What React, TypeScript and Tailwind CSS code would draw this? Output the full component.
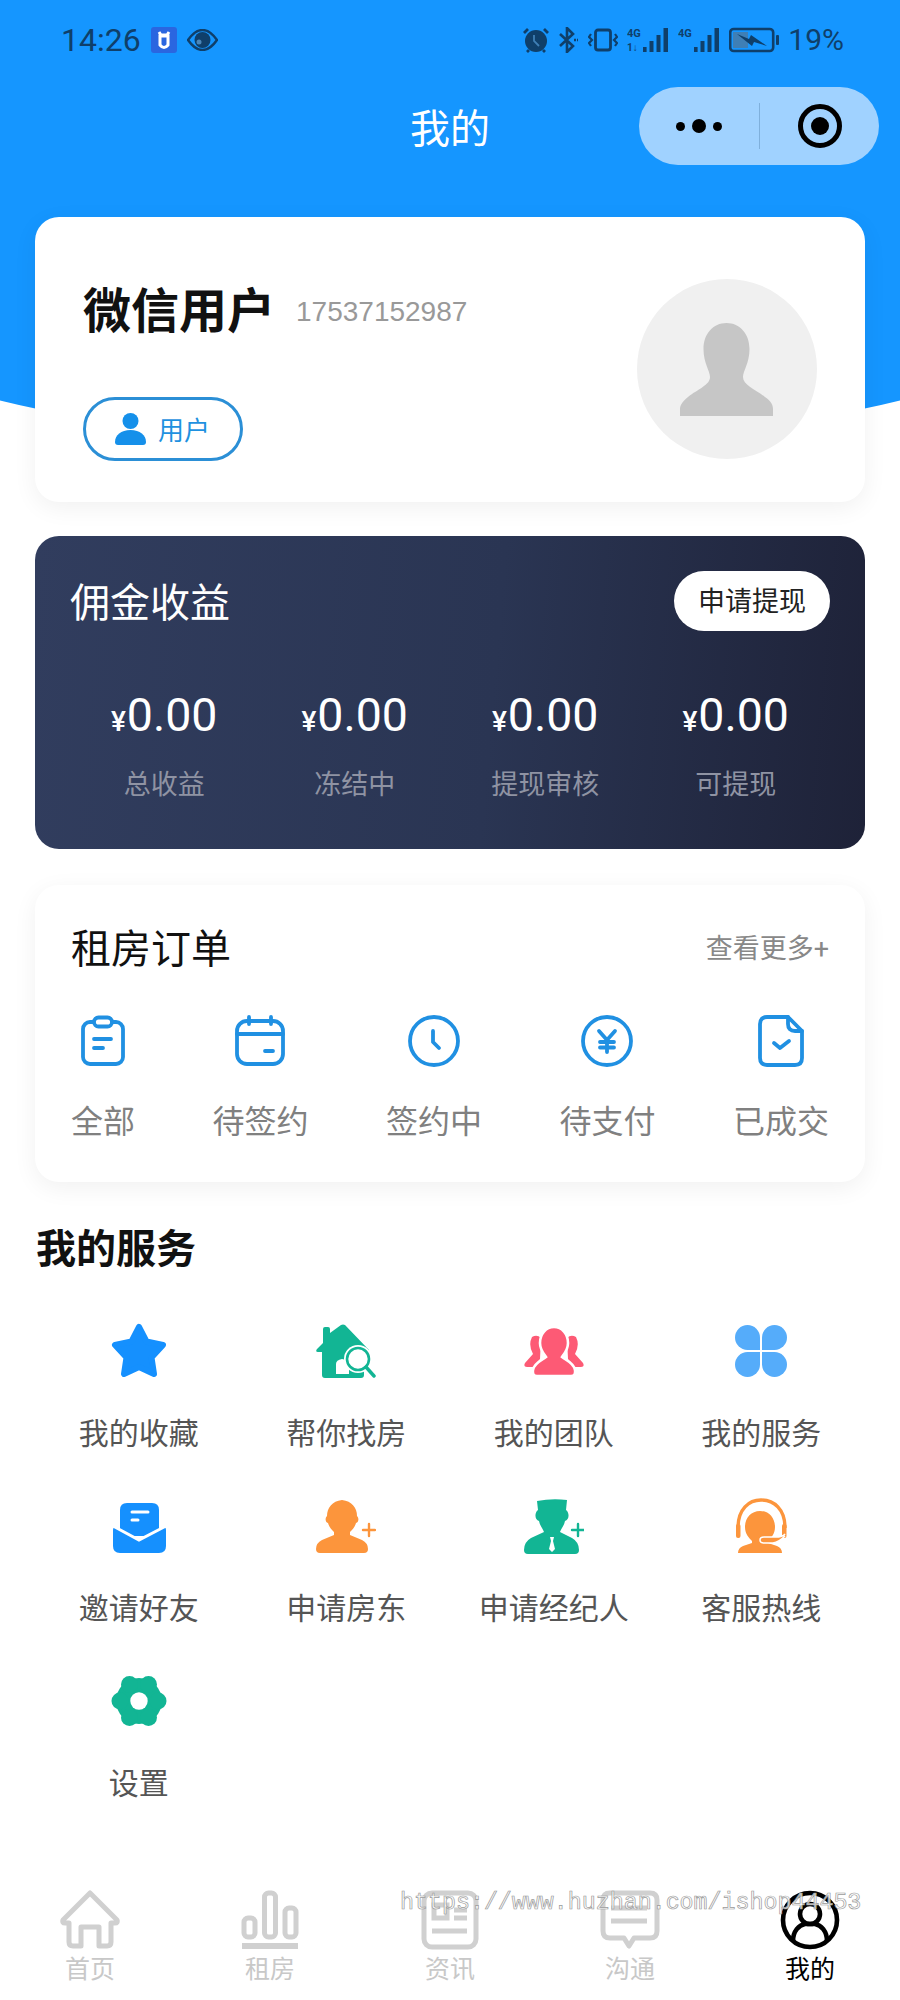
import React from 'react';

const BLUE = '#2090e2';
const DARK = '#0f3f6a';
const GREEN = '#12b594';
const ORANGE = '#fc953c';
const TAB_GRAY = '#d0d0d0';

function Clipboard() {
  return (
    <svg width="44" height="52" viewBox="0 0 44 52" fill="none" stroke={BLUE} strokeWidth="3.8" strokeLinecap="round">
      <rect x="2" y="7" width="40" height="42" rx="7" />
      <rect x="13" y="2.5" width="18" height="9" rx="4.5" fill="#fff" />
      <path d="M13 24H30M13 33H22" />
    </svg>
  );
}

function CalendarIcon() {
  return (
    <svg width="50" height="52" viewBox="0 0 50 52" fill="none" stroke={BLUE} strokeWidth="3.8" strokeLinecap="round">
      <rect x="2" y="6" width="46" height="43" rx="10" />
      <path d="M2 19H48M14 2V9M36 2V9M30 36H38" />
    </svg>
  );
}

function ClockIcon() {
  return (
    <svg width="52" height="52" viewBox="0 0 52 52" fill="none" stroke={BLUE} strokeWidth="3.8" strokeLinecap="round" strokeLinejoin="round">
      <circle cx="26" cy="26" r="24" />
      <path d="M25 16V27L31 33" />
    </svg>
  );
}

function YenIcon() {
  return (
    <svg width="52" height="52" viewBox="0 0 52 52" fill="none" stroke={BLUE} strokeWidth="3.8" strokeLinecap="round" strokeLinejoin="round">
      <circle cx="26" cy="26" r="24" />
      <path d="M18 16L26 25L34 16M26 25V37M19 27H33M19 32.500H33" />
    </svg>
  );
}

function DocCheck() {
  return (
    <svg width="46" height="52" viewBox="0 0 46 52" fill="none" stroke={BLUE} strokeWidth="3.8" strokeLinecap="round" strokeLinejoin="round">
      <path d="M9 2H30L44 16V43Q44 50 37 50H9Q2 50 2 43V9Q2 2 9 2Z" />
      <path d="M30 2V9Q30 16 37 16H44" />
      <path d="M16 28L22 33L31 26" />
    </svg>
  );
}

function StarIcon() {
  return (
    <svg width="60" height="60" viewBox="0 0 60 60" fill="#1590fe" stroke="#1590fe" strokeWidth="6" strokeLinejoin="round">
      <path d="M30 6L37.5 20.5L54 24L42.5 36.5L45 53L30 46L15 53L17.5 36.5L6 24L22.5 20.5Z" />
    </svg>
  );
}

function HouseIcon() {
  return (
    <svg width="60" height="60" viewBox="0 0 60 60">
      <path d="M7 8Q7 6 9 6H12Q14 6 14 8V12L25 4Q27 3 29 4L53 29Q52 31 49 31H48V54Q48 57 45 57H9Q6 57 6 54V31H2Q-1 31 1 28L7 22Z" fill={GREEN} />
      <path d="M20 53V43Q20 39 26 38Q33 39 33 43V53Z" fill="#fff" />
      <circle cx="42" cy="38" r="14" fill="#fff" />
      <circle cx="42" cy="38" r="11" fill="#fff" stroke={GREEN} strokeWidth="2.6" />
      <path d="M50 46L58 55" stroke={GREEN} strokeWidth="3.4" strokeLinecap="round" />
    </svg>
  );
}

function TeamIcon() {
  const red = '#fd5a75';
  return (
    <svg width="60" height="60" viewBox="0 0 60 60" fill={red}>
      <path d="M8 16Q13 13 17 17L16 38L10 46H3Q-1 46 1 42L9 33Q4 24 8 16Z" />
      <path d="M52 16Q47 13 43 17L44 38L50 46H57Q61 46 59 42L51 33Q56 24 52 16Z" />
      <path
        d="M30 6C38 6 44 13 44 22C44 29 40 33 38 36C42 39 50 42 51 49Q52 55 47 55H13Q8 55 9 49C10 42 18 39 22 36C20 33 16 29 16 22C16 13 22 6 30 6Z"
        stroke="#fff"
        strokeWidth="2.6"
      />
    </svg>
  );
}

function CloverIcon() {
  const petal = 'M29 29H16.5A12.5 12.5 0 1 1 29 16.5Z';
  return (
    <svg width="60" height="60" viewBox="0 0 60 60" fill="#55acfa">
      <path d={petal} />
      <path d={petal} transform="rotate(90 30 30)" />
      <path d={petal} transform="rotate(180 30 30)" />
      <path d={petal} transform="rotate(270 30 30)" />
    </svg>
  );
}

function MailIcon() {
  return (
    <svg width="60" height="60" viewBox="0 0 60 60">
      <path d="M11 14Q11 7 18 7H43Q50 7 50 14V40H11Z" fill="#1590fe" />
      <path d="M23 16H39M23 24H29" stroke="#fff" strokeWidth="3" strokeLinecap="round" />
      <path d="M4 34Q4 30 8 32L30 44L52 32Q57 30 57 34V50Q57 57 50 57H11Q4 57 4 50Z" fill="#1590fe" />
      <path d="M4 30L30 44L57 30" fill="none" stroke="#fff" strokeWidth="3" />
    </svg>
  );
}

function PersonPlus({ color, variant }: { color: string; variant: 'hair' | 'tie' }) {
  return (
    <svg width="60" height="60" viewBox="0 0 60 60" fill={color}>
      {variant === 'hair' ? (
        <path d="M26 4C36 5 41 12 41 20C43 22 43 26 40 27C39 31 36 34 34 36V39L46 44Q52 47 52 53Q52 57 48 57H4Q0 57 0 53Q0 47 6 44L18 39V36C16 34 13 31 12 27C9 26 9 22 11 20C11 12 16 5 26 4Z" />
      ) : (
        <path d="M13 5Q28 2 43 4L42 14C46 17 45 24 41 25C40 30 37 33 36 36L48 42Q55 46 55 54Q55 58 51 58H4Q0 58 0 54Q0 46 7 42L20 36C19 33 16 30 15 25C11 24 10 17 14 14Z" />
      )}
      {variant === 'tie' && <path d="M26 41H30L29 45L31 53L28 56L25 53L27 45Z" fill="#fff" />}
      <path d={variant === 'hair' ? 'M53 28V40M47 34H59' : 'M54 28V40M48 34H60'} stroke={color} strokeWidth="2.4" strokeLinecap="round" />
    </svg>
  );
}

function HeadsetIcon() {
  return (
    <svg width="60" height="60" viewBox="0 0 60 60">
      <path d="M29 15C38 15 44 22 44 31C44 38 40 42 37 45V47L46 50Q51 52 51 57H7Q7 52 12 50L21 47V45C18 42 14 38 14 31C14 22 20 15 29 15Z" fill={ORANGE} />
      <path d="M7 32C7 13 18 4 30 4C43 4 54 13 54 32" fill="none" stroke={ORANGE} strokeWidth="3.4" />
      <rect x="5" y="28" width="4.5" height="14" rx="2" fill={ORANGE} />
      <rect x="51" y="28" width="4.5" height="14" rx="2" fill={ORANGE} />
      <path d="M54 38Q52 41 44 41H33Q29 41 29 44Q29 47 33 47H42Q48 46 54 40" fill={ORANGE} stroke="#fff" strokeWidth="1.5" />
    </svg>
  );
}

function GearIcon() {
  const lobes = [
    [49, 30],
    [39.5, 46.5],
    [20.5, 46.5],
    [11, 30],
    [20.5, 13.5],
    [39.5, 13.5],
  ];
  return (
    <svg width="60" height="60" viewBox="0 0 60 60" fill={GREEN}>
      <circle cx="30" cy="30" r="23" />
      {lobes.map(([x, y]) => (
        <circle key={`${x}-${y}`} cx={x} cy={y} r="8.5" />
      ))}
      <circle cx="30" cy="30" r="8.7" fill="#fff" />
    </svg>
  );
}

function HomeTab() {
  return (
    <svg width="60" height="60" viewBox="0 0 60 60" fill="none" stroke={TAB_GRAY} strokeWidth="5" strokeLinejoin="round">
      <path d="M30 3L3 30Q2 33 5 33H9V52Q9 56 13 56H21V37H39V56H47Q51 56 51 52V33H55Q58 33 57 30Z" />
    </svg>
  );
}

function BarsTab() {
  return (
    <svg width="60" height="60" viewBox="0 0 60 60" fill="none" stroke={TAB_GRAY} strokeWidth="5">
      <rect x="4" y="28" width="11" height="19" rx="4" />
      <rect x="24.5" y="3" width="11" height="44" rx="4" />
      <rect x="45" y="18" width="11" height="29" rx="4" />
      <path d="M2 56H58" strokeWidth="6" />
    </svg>
  );
}

function NewsTab() {
  return (
    <svg width="60" height="60" viewBox="0 0 60 60" fill="none" stroke={TAB_GRAY} strokeWidth="5">
      <rect x="4" y="3" width="52" height="54" rx="8" />
      <rect x="14" y="15" width="13" height="13" />
      <path d="M34 20H47M34 28H47M12 41H47" />
    </svg>
  );
}

function ChatTab() {
  return (
    <svg width="60" height="60" viewBox="0 0 60 60" fill="none" stroke={TAB_GRAY} strokeWidth="5" strokeLinejoin="round">
      <path d="M10 3H50Q57 3 57 10V41Q57 48 50 48H34L29 56L24 48H10Q3 48 3 41V10Q3 3 10 3Z" />
      <path d="M11 18H47M11 31H47" />
    </svg>
  );
}

function MineTab() {
  return (
    <svg width="60" height="60" viewBox="0 0 60 60" fill="none" stroke="#000" strokeWidth="4.6">
      <circle cx="30" cy="30" r="27" />
      <circle cx="30" cy="24" r="10" />
      <path d="M13 51C13 41 19 35 25 34H35C41 35 47 41 47 51" />
    </svg>
  );
}

function Signal({ lower }: { lower: boolean }) {
  return (
    <svg width="42" height="26" viewBox="0 0 42 26" fill={DARK}>
      <text x="0" y="9.500" fontSize="11" fontWeight="700" fontFamily="Roboto, sans-serif">4G</text>
      {lower && <text x="0" y="24" fontSize="10" fontWeight="700" fontFamily="Roboto, sans-serif">1↓</text>}
      <rect x="16" y="20" width="3.600" height="5" />
      <rect x="22.500" y="14" width="4" height="11" />
      <rect x="29.500" y="8" width="4" height="17" />
      <rect x="36.500" y="1" width="4.500" height="24" />
    </svg>
  );
}

function StatusBar() {
  return (
    <div className="flex h-[80px] items-center justify-between pl-[61px] pr-[56px]" style={{ color: DARK }}>
      <div className="flex items-center gap-[10px]">
        <span className="text-[32px] leading-none">14:26</span>
        <svg width="26" height="26" viewBox="0 0 26 26">
          <rect width="26" height="26" rx="3" fill="#2a66e0" />
          <path d="M8 5L10 8H16L18 5M9 9H17V18Q13 23 9 18Z" fill="none" stroke="#fff" strokeWidth="3" />
        </svg>
        <svg width="31" height="22" viewBox="0 0 31 22">
          <path d="M1 11Q8 1 15.500 1Q23 1 30 11Q23 21 15.500 21Q8 21 1 11Z" fill="none" stroke={DARK} strokeWidth="2.4" />
          <circle cx="15.500" cy="11" r="8" fill={DARK} />
          <circle cx="12" cy="13" r="2.500" fill="#4b86b8" />
        </svg>
      </div>
      <div className="flex items-center gap-[9px]">
        <svg width="28" height="26" viewBox="0 0 28 26" fill="none" stroke={DARK}>
          <circle cx="14" cy="14" r="11" fill={DARK} strokeWidth="0" />
          <path d="M12 8V14L17 19" stroke="#3f7fb5" strokeWidth="1.8" />
          <path d="M2 6L6 2M26 6L22 2M7 23L5 25M21 23L23 25" strokeWidth="2.8" />
        </svg>
        <svg width="20" height="26" viewBox="0 0 20 26" fill="none" stroke={DARK} strokeWidth="2.6">
          <path d="M1 7L14 19L8 25V1L14 7L1 19" />
          <path d="M15 13H19" strokeDasharray="2 1" />
        </svg>
        <svg width="30" height="24" viewBox="0 0 30 24" fill="none" stroke={DARK} strokeWidth="2.8">
          <rect x="7.500" y="2" width="15" height="20" rx="2.500" />
          <path d="M3 6L1 9L4 12L1 15L3 18M27 6L29 9L26 12L29 15L27 18" strokeWidth="2.2" />
        </svg>
        <Signal lower />
        <Signal lower={false} />
        <svg width="50" height="26" viewBox="0 0 50 26" fill="none" stroke={DARK}>
          <rect x="1.200" y="2" width="43" height="22" rx="3.500" strokeWidth="2.6" />
          <rect x="4" y="5" width="15" height="16" fill="#3f7fb5" stroke="none" />
          <rect x="47" y="8" width="3" height="10" rx="1" fill={DARK} stroke="none" />
          <path d="M8 7L20 12L22 8L38 19L25 15L23 19Z" fill={DARK} stroke="none" />
        </svg>
        <span className="text-[30px] leading-none">19%</span>
      </div>
    </div>
  );
}

const services = [
  { name: '我的收藏', icon: <StarIcon /> },
  { name: '帮你找房', icon: <HouseIcon /> },
  { name: '我的团队', icon: <TeamIcon /> },
  { name: '我的服务', icon: <CloverIcon /> },
  { name: '邀请好友', icon: <MailIcon /> },
  { name: '申请房东', icon: <PersonPlus color={ORANGE} variant="hair" /> },
  { name: '申请经纪人', icon: <PersonPlus color={GREEN} variant="tie" /> },
  { name: '客服热线', icon: <HeadsetIcon /> },
  { name: '设置', icon: <GearIcon /> },
];

const orders = [
  { name: '全部', icon: <Clipboard /> },
  { name: '待签约', icon: <CalendarIcon /> },
  { name: '签约中', icon: <ClockIcon /> },
  { name: '待支付', icon: <YenIcon /> },
  { name: '已成交', icon: <DocCheck /> },
];

const earnings = ['总收益', '冻结中', '提现审核', '可提现'];

const tabs = [
  { name: '首页', icon: <HomeTab /> },
  { name: '租房', icon: <BarsTab /> },
  { name: '资讯', icon: <NewsTab /> },
  { name: '沟通', icon: <ChatTab /> },
  { name: '我的', icon: <MineTab />, active: true },
];

export default function App() {
  return (
    <div className="relative flex h-[2000px] w-[900px] flex-col overflow-hidden bg-white font-['Roboto','Noto_Sans_CJK_SC',sans-serif]">
      <div className="absolute left-[-200px] top-0 h-[447px] w-[1300px] rounded-b-[650px_167px] bg-[#1596ff]" />

      <div className="relative flex flex-1 flex-col">
        <StatusBar />

        <div className="mt-[7px] grid h-[78px] grid-cols-[1fr_auto_1fr] items-center">
          <div />
          <div className="pt-[8px] text-[40px] leading-none text-white">我的</div>
          <div className="mr-[21px] flex h-[78px] w-[240px] items-center justify-self-end rounded-full bg-[#a0d2ff]">
            <div className="flex w-[120px] items-center justify-center gap-[7px]">
              <span className="h-[9px] w-[9px] rounded-full bg-black" />
              <span className="h-[14px] w-[14px] rounded-full bg-black" />
              <span className="h-[9px] w-[9px] rounded-full bg-black" />
            </div>
            <div className="h-[46px] w-px bg-[#7fb0dc]" />
            <div className="flex flex-1 items-center justify-center">
              <div className="flex h-[44px] w-[44px] items-center justify-center rounded-full border-[5px] border-black">
                <span className="h-[18px] w-[18px] rounded-full bg-black" />
              </div>
            </div>
          </div>
        </div>

        <div className="mx-[35px] mt-[52px] flex h-[285px] justify-between rounded-[24px] bg-white pl-[48px] pr-[48px] pt-[62px] shadow-[0_6px_24px_rgba(0,0,0,0.06)]">
          <div className="pt-[3px]">
            <div className="flex items-center gap-[21px]">
              <span className="text-[48px] font-bold leading-[60px] text-[#111]">微信用户</span>
              <span className="font-['Liberation_Sans'] text-[28px] text-[#999]">17537152987</span>
            </div>
            <div className="mt-[55px] flex h-[64px] w-[160px] items-center gap-[12px] rounded-full border-[3px] border-[#2b8fd6] pl-[29px]">
              <svg width="31" height="32" viewBox="0 0 31 32" fill="#1590ea">
                <circle cx="15.500" cy="8" r="8" />
                <path d="M0 29C0 22 6 17 15.500 17C25 17 31 22 31 29Q31 32 28 32H3Q0 32 0 29Z" />
              </svg>
              <span className="pt-[4px] text-[26px] leading-none text-[#1f91e0]">用户</span>
            </div>
          </div>
          <div className="h-[180px] w-[180px] rounded-full bg-[#f0f0f0]">
            <svg width="180" height="180" viewBox="0 0 180 180" fill="#c6c6c6">
              <path d="M89.500 44C103 44 112.500 55 112.500 70C112.500 84 106 92 106 98C106 106 118 110 128 118C134 122 136 126 136 130V137H43V130C43 126 46 122 51 118C61 110 73 106 73 98C73 92 66.500 84 66.500 70C66.500 55 76 44 89.500 44Z" />
            </svg>
          </div>
        </div>

        <div className="mx-[35px] mt-[34px] h-[313px] rounded-[24px] bg-[linear-gradient(95deg,#313d5e,#2a3553_55%,#1e2238)] pt-[35px]">
          <div className="flex h-[60px] items-center justify-between px-[35px]">
            <span className="pt-[6px] text-[40px] leading-none text-white">佣金收益</span>
            <span className="flex h-[60px] w-[156px] items-center justify-center rounded-full bg-white pt-[3px] text-[27px] text-[#222]">申请提现</span>
          </div>
          <div className="mx-[34px] mt-[56px] grid grid-cols-4">
            {earnings.map((label) => (
              <div key={label} className="flex flex-col items-center">
                <div className="flex h-[56px] items-baseline leading-[56px] text-white">
                  <span className="mr-[1px] text-[28px] font-medium">¥</span>
                  <span className="text-[46.5px]">0.00</span>
                </div>
                <span className="mt-[22px] text-[27px] leading-[40px] text-[#8f93a3]">{label}</span>
              </div>
            ))}
          </div>
        </div>

        <div className="mx-[35px] mt-[36px] h-[297px] rounded-[24px] bg-white px-[36px] pt-[38px] shadow-[0_6px_24px_rgba(0,0,0,0.06)]">
          <div className="flex h-[50px] items-center justify-between">
            <span className="pt-[4px] text-[40px] leading-none text-[#111]">租房订单</span>
            <span className="pt-[2px] text-[27px] leading-none text-[#888]">查看更多+</span>
          </div>
          <div className="mt-[42px] flex justify-between">
            {orders.map((order) => (
              <div key={order.name} className="flex flex-col items-center">
                <div className="flex h-[52px] items-center justify-center">{order.icon}</div>
                <span className="mt-[33px] text-[32px] leading-[44px] text-[#808080]">{order.name}</span>
              </div>
            ))}
          </div>
        </div>

        <div className="ml-[36px] mt-[43px] text-[40px] font-bold leading-[50px] text-[#111]">我的服务</div>

        <div className="mx-[35px] mt-[46px] grid grid-cols-4 gap-y-[42px]">
          {services.map((item) => (
            <div key={item.name} className="flex flex-col items-center">
              <div className="h-[60px] w-[60px]">{item.icon}</div>
              <span className="mt-[33px] text-[30px] leading-[40px] text-[#555]">{item.name}</span>
            </div>
          ))}
        </div>

        <div className="mt-auto grid grid-cols-5 pb-[12px]">
          {tabs.map((tab) => (
            <div key={tab.name} className="flex flex-col items-center">
              <div className="h-[60px] w-[60px]">{tab.icon}</div>
              <span className={`mt-[2px] text-[25px] leading-[36px] ${tab.active ? 'text-black' : 'text-[#c8c8c8]'}`}>{tab.name}</span>
            </div>
          ))}
        </div>
      </div>

      <div className="absolute left-[400px] top-[1888px] font-['Liberation_Mono',monospace] text-[23.3px] leading-[30px] text-white/80 [-webkit-text-stroke:0.7px_#9a9a9a]">
        https://www.huzhan.com/ishop44453
      </div>
    </div>
  );
}
